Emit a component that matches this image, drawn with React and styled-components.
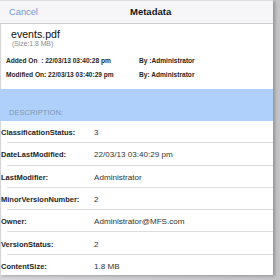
import React from "react";
import styled, { createGlobalStyle } from "styled-components";

const GlobalStyle = createGlobalStyle`
  html, body { margin: 0; padding: 0; }
  body {
    background: #d4d4d6;
    font-family: "Liberation Sans", Arial, Helvetica, sans-serif;
    -webkit-font-smoothing: antialiased;
  }
`;

const Frame = styled.div`
  width: 280px;
  height: 280px;
  overflow: hidden;
  background: linear-gradient(90deg, #d8d8da 0%, #c4c4c6 100%);
`;

const Card = styled.div`
  width: 273px;
  height: 275px;
  background: #ffffff;
  overflow: hidden;
  box-shadow: inset 2px 0 1px -1px rgba(0, 0, 0, 0.18), 2px 1px 3px rgba(0, 0, 0, 0.25);
  display: flex;
  flex-direction: column;
`;

const NavBar = styled.div`
  height: 24px;
  box-sizing: border-box;
  flex: none;
  display: grid;
  grid-template-columns: 130px auto 1fr;
  align-items: center;
  background: #f6f6f8;
  border-bottom: 1px solid #cfcfd3;
  box-shadow: inset 0 1px 0 #dedee0;
`;

const Cancel = styled.span`
  padding-left: 9px;
  font-size: 9.3px;
  color: #7296d6;
`;

const Title = styled.span`
  font-size: 9.5px;
  font-weight: bold;
  color: #141414;
`;

const FileHeader = styled.div`
  padding: 4px 0 0 11px;
  display: flex;
  flex-direction: column;
`;

const FileName = styled.div`
  font-size: 10.6px;
  line-height: 12px;
  color: #111;
`;

const FileSize = styled.div`
  padding-left: 1px;
  font-size: 6.8px;
  line-height: 8px;
  color: #8a8a8a;
`;

const Audit = styled.div`
  margin-top: 9px;
  padding-left: 6px;
  display: grid;
  grid-template-columns: 133px 1fr;
  row-gap: 6px;
`;

const AuditText = styled.span`
  font-size: 6.6px;
  line-height: 8px;
  font-weight: bold;
  color: #262626;
  white-space: pre;
`;

const Band = styled.div`
  margin-top: 10px;
  height: 32px;
  box-sizing: border-box;
  flex: none;
  padding: 19px 0 0 9px;
  background: #afd0fb;
`;

const BandText = styled.span`
  font-size: 7.6px;
  line-height: 9px;
  color: #8496ab;
  display: block;
`;

const Row = styled.div`
  height: 22.3px;
  box-sizing: border-box;
  flex: none;
  padding: 2px 0 1px 1px;
  display: grid;
  grid-template-columns: 93px 1fr;
  align-items: center;
  background: linear-gradient(#dcdcdc, #dcdcdc) no-repeat 7px 100% / calc(100% - 7px) 1px;
`;

const Label = styled.span`
  font-size: 7.5px;
  font-weight: bold;
  color: #1e1e1e;
  white-space: nowrap;
`;

const Value = styled.span`
  font-size: 8.1px;
  color: #333;
  white-space: nowrap;
`;

const properties = [
  ["ClassificationStatus:", "3"],
  ["DateLastModified:", "22/03/13 03:40:29 pm"],
  ["LastModifier:", "Administrator"],
  ["MinorVersionNumber:", "2"],
  ["Owner:", "Administrator@MFS.com"],
  ["VersionStatus:", "2"],
  ["ContentSize:", "1.8 MB"],
];

export default function App() {
  return (
    <>
      <GlobalStyle />
      <Frame>
        <Card>
          <NavBar>
            <Cancel>Cancel</Cancel>
            <Title>Metadata</Title>
          </NavBar>
          <FileHeader>
            <FileName>events.pdf</FileName>
            <FileSize>(Size:1.8 MB)</FileSize>
          </FileHeader>
          <Audit>
            <AuditText>{"Added On  : 22/03/13 03:40:28 pm"}</AuditText>
            <AuditText>By :Administrator</AuditText>
            <AuditText>Modified On: 22/03/13 03:40:29 pm</AuditText>
            <AuditText>By: Administrator</AuditText>
          </Audit>
          <Band>
            <BandText>DESCRIPTION:</BandText>
          </Band>
          {properties.map(([label, value]) => (
            <Row key={label}>
              <Label>{label}</Label>
              <Value>{value}</Value>
            </Row>
          ))}
        </Card>
      </Frame>
    </>
  );
}
